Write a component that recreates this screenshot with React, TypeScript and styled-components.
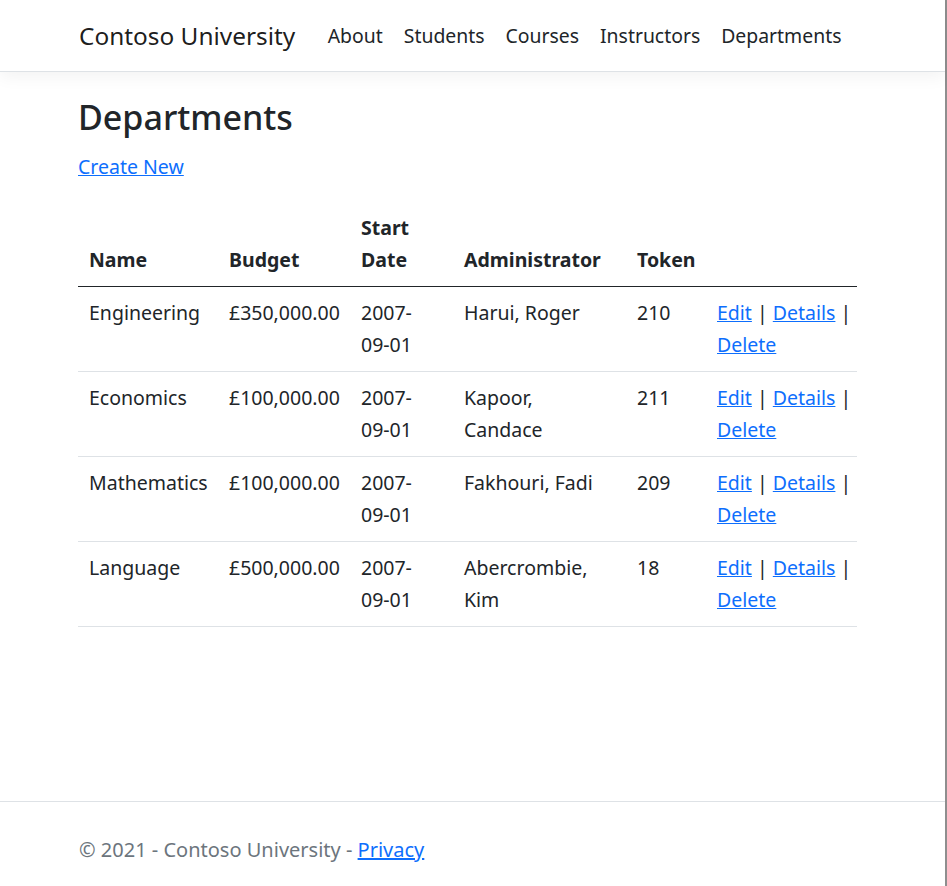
import React, { FC } from 'react';
import styled, { createGlobalStyle } from 'styled-components';

const GlobalStyle = createGlobalStyle`
    html, body {
        margin: 0;
        padding: 0;
        background: #fff;
    }
    body {
        font-family: 'Noto Sans', 'Open Sans', sans-serif;
        font-size: 19.5px;
        line-height: 31.5px;
        color: #212529;
    }
    * {
        box-sizing: border-box;
    }
`;

const Page = styled.div`
    display: flex;
    flex-direction: column;
    min-height: 100vh;
    width: 947px;
    border-right: 2px solid #8e8e8e;
`;

const Header = styled.header`
    height: 72px;
    border-bottom: 1px solid #dee2e6;
    box-shadow: 0 5px 16px rgba(0, 0, 0, 0.05);
    display: flex;
    align-items: center;
    padding-left: 79px;
`;

const Brand = styled.a`
    font-size: 24.4px;
    color: rgba(0, 0, 0, 0.9);
    text-decoration: none;
    margin-right: 22px;
`;

const NavList = styled.nav`
    display: flex;
    align-items: center;
`;

const NavLink = styled.a`
    font-size: 19.4px;
    color: #212529;
    text-decoration: none;
    padding: 0 10.5px;
`;

const Main = styled.main`
    margin-left: 78px;
    width: 779px;
    padding-top: 21px;
    padding-bottom: 21px;
`;

const Title = styled.h1`
    font-size: 34px;
    font-weight: 500;
    line-height: 48px;
    margin: 0 0 10px;
`;

const Link = styled.a`
    color: #0d6efd;
    text-decoration: underline;
    cursor: pointer;
`;

const Para = styled.p`
    margin: 0 0 19px;
`;

const Table = styled.table`
    width: 100%;
    border-collapse: collapse;
    table-layout: fixed;
`;

const Col = styled.col<{ $w: number }>`
    width: ${(p) => p.$w}px;
`;

const Th = styled.th`
    text-align: left;
    vertical-align: bottom;
    font-weight: 700;
    padding: 10.5px 11px;
    border-bottom: 1px solid #212529;
`;

const Td = styled.td`
    vertical-align: top;
    padding: 10.5px 11px;
    border-bottom: 1px solid #dee2e6;
`;

const NoWrap = styled.span`
    white-space: nowrap;
`;

const Footer = styled.footer`
    margin-top: auto;
    border-top: 1px solid #dee2e6;
    padding: 32px 0 21px 79px;
    color: #6c757d;
    font-size: 20px;
    line-height: 31px;
    white-space: nowrap;
`;

interface Department {
    name: string;
    budget: string;
    start: [string, string];
    admin: string;
    token: number;
}

const departments: Department[] = [
    { name: 'Engineering', budget: '£350,000.00', start: ['2007-', '09-01'], admin: 'Harui, Roger', token: 210 },
    { name: 'Economics', budget: '£100,000.00', start: ['2007-', '09-01'], admin: 'Kapoor, Candace', token: 211 },
    { name: 'Mathematics', budget: '£100,000.00', start: ['2007-', '09-01'], admin: 'Fakhouri, Fadi', token: 209 },
    { name: 'Language', budget: '£500,000.00', start: ['2007-', '09-01'], admin: 'Abercrombie, Kim', token: 18 },
];

const Row: FC<{ dept: Department }> = ({ dept }) => (
    <tr>
        <Td>{dept.name}</Td>
        <Td>{dept.budget}</Td>
        <Td>
            {dept.start[0]}
            <wbr />
            <NoWrap>{dept.start[1]}</NoWrap>
        </Td>
        <Td>{dept.admin}</Td>
        <Td>{dept.token}</Td>
        <Td>
            <NoWrap>
                <Link>Edit</Link> | <Link>Details</Link> |
            </NoWrap>{' '}
            <Link>Delete</Link>
        </Td>
    </tr>
);

const App: FC = () => (
    <Page>
        <GlobalStyle />
        <Header>
            <Brand>Contoso University</Brand>
            <NavList>
                <NavLink>About</NavLink>
                <NavLink>Students</NavLink>
                <NavLink>Courses</NavLink>
                <NavLink>Instructors</NavLink>
                <NavLink>Departments</NavLink>
            </NavList>
        </Header>
        <Main>
            <Title>Departments</Title>
            <Para>
                <Link>Create New</Link>
            </Para>
            <Table>
                <colgroup>
                    <Col $w={140} />
                    <Col $w={132} />
                    <Col $w={103} />
                    <Col $w={173} />
                    <Col $w={80} />
                    <Col $w={151} />
                </colgroup>
                <thead>
                    <tr>
                        <Th>Name</Th>
                        <Th>Budget</Th>
                        <Th>Start Date</Th>
                        <Th>Administrator</Th>
                        <Th>Token</Th>
                        <Th />
                    </tr>
                </thead>
                <tbody>
                    {departments.map((d) => (
                        <Row key={d.name} dept={d} />
                    ))}
                </tbody>
            </Table>
        </Main>
        <Footer>
            © 2021 - Contoso University - <Link>Privacy</Link>
        </Footer>
    </Page>
);

export default App;
